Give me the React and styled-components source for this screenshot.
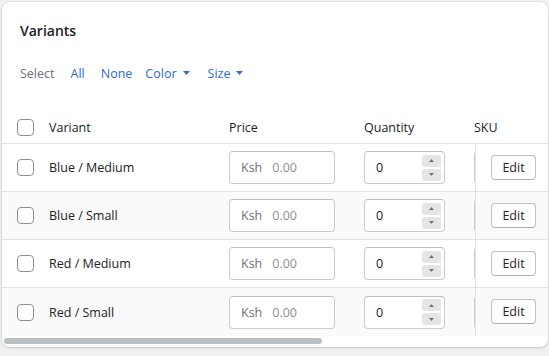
import React from "react";
import styled, { createGlobalStyle } from "styled-components";

const GlobalStyle = createGlobalStyle`
  html, body { margin: 0; padding: 0; background: #f1f1f1; }
  body { font-family: "Open Sans", "Noto Sans", sans-serif; color: #202223; }
  * { box-sizing: border-box; }
`;

const VIEW_WIDTH = 546;
const TABLE_WIDTH = 926;

const Page = styled.div`
  padding: 2px 1px 10px 2px;
  width: 549px;
`;

const Card = styled.section`
  background: #fff;
  border-radius: 8px;
  box-shadow: 0 0 0 1px rgba(63, 63, 68, 0.06), 0 1px 3px 0 rgba(63, 63, 68, 0.18);
  overflow: hidden;
  padding-top: 18px;
`;

const Title = styled.h2`
  margin: 0;
  padding: 0 18px;
  font-size: 14px;
  font-weight: 600;
  line-height: 22px;
  color: #202223;
`;

const FilterBar = styled.div`
  display: flex;
  align-items: center;
  gap: 15px;
  padding: 0 18px;
  margin-top: 20px;
  height: 22px;
  font-size: 12.5px;
`;

const FilterLabel = styled.span`
  color: #6d7175;
`;

const FilterButton = styled.button`
  display: inline-flex;
  align-items: center;
  gap: 6px;
  border: 0;
  background: none;
  padding: 0;
  margin-left: ${(p) => p.$shift || 0}px;
  font: inherit;
  color: #2c6ecb;
  cursor: pointer;
`;

const Caret = () => (
  <svg width="7" height="4" viewBox="0 0 7 4" aria-hidden="true">
    <path d="M0 0h7L3.5 4z" fill="#2c6ecb" />
  </svg>
);

const Scroller = styled.div`
  margin-top: 27px;
  overflow: hidden;
`;

const ScrollTrack = styled.div`
  height: 11px;
  padding: 2px 2px 3px;
`;

const ScrollThumb = styled.div`
  height: 100%;
  border-radius: 4px;
  background: #babfc4;
`;

const Table = styled.div`
  width: ${TABLE_WIDTH}px;
`;

const Row = styled.div`
  display: grid;
  grid-template-columns: 47px 180px 135px 110px 381px 73px;
  align-items: center;
  height: ${(p) => (p.$head ? 33 : 48)}px;
  background: ${(p) => (p.$shade ? "#fafafa" : "#fff")};
  border-bottom: ${(p) => (p.$last ? "0" : "1px solid #e1e3e5")};
  font-size: 12.5px;
`;

const Cell = styled.div`
  display: flex;
  align-items: center;
  height: 100%;
  padding-left: ${(p) => p.$pad || 0}px;
  font-weight: 500;
  color: #202223;
  white-space: nowrap;
`;

const StickyCell = styled.div`
  position: sticky;
  right: 0;
  display: flex;
  align-items: center;
  height: 100%;
  padding-left: 15px;
  background: ${(p) => (p.$shade ? "#fafafa" : "#fff")};
  border-left: 1px solid #e1e3e5;
`;

const Checkbox = styled.span`
  display: inline-block;
  width: 17px;
  height: 17px;
  border: 1px solid #8c9196;
  border-radius: 4px;
  background: #fff;
`;

const Field = styled.div`
  display: flex;
  align-items: center;
  width: ${(p) => p.$w}px;
  height: 33px;
  border: 1px solid #c9cccf;
  border-top-color: #babfc3;
  border-radius: 4px;
  background: #fff;
  padding: 0 3px 0 11px;
  font-size: 12.5px;
  font-weight: 400;
`;

const Prefix = styled.span`
  color: #6d7175;
  margin-right: 10px;
`;

const Placeholder = styled.span`
  color: #8c9196;
`;

const Value = styled.span`
  flex: 1;
  color: #202223;
`;

const Spinner = styled.div`
  display: flex;
  flex-direction: column;
  gap: 2px;
`;

const SpinButton = styled.span`
  display: flex;
  align-items: center;
  justify-content: center;
  width: 19px;
  height: 12px;
  border-radius: 2px;
  background: #e4e5e7;
`;

const Arrow = ({ up }) => (
  <svg width="5" height="3" viewBox="0 0 5 3" aria-hidden="true">
    <path d={up ? "M0 3h5L2.5 0z" : "M0 0h5L2.5 3z"} fill="#6d7175" />
  </svg>
);

const EditButton = styled.button`
  height: 25px;
  width: 45px;
  border: 1px solid #babfc3;
  border-bottom-color: #a9aeb3;
  border-radius: 4px;
  background: #fff;
  font: inherit;
  font-size: 12.5px;
  color: #202223;
  padding: 0;
  margin-top: -1px;
`;

const variants = ["Blue / Medium", "Blue / Small", "Red / Medium", "Red / Small"];

export default function App() {
  const thumbWidth = Math.round(((VIEW_WIDTH - 4) * VIEW_WIDTH) / TABLE_WIDTH) - 2;
  return (
    <>
      <GlobalStyle />
      <Page>
        <Card>
          <Title>Variants</Title>
          <FilterBar>
            <FilterLabel>Select</FilterLabel>
            <FilterButton $shift={1}>All</FilterButton>
            <FilterButton $shift={1}>None</FilterButton>
            <FilterButton $shift={-2}>
              Color <Caret />
            </FilterButton>
            <FilterButton $shift={3}>
              Size <Caret />
            </FilterButton>
          </FilterBar>
          <Scroller>
            <Table>
              <Row $head>
                <Cell $pad={15}>
                  <Checkbox />
                </Cell>
                <Cell>Variant</Cell>
                <Cell>Price</Cell>
                <Cell>Quantity</Cell>
                <Cell>SKU</Cell>
                <Cell />
              </Row>
              {variants.map((v, i) => (
                <Row key={v} $shade={i % 2 === 1} $last={i === variants.length - 1}>
                  <Cell $pad={15}>
                    <Checkbox />
                  </Cell>
                  <Cell>{v}</Cell>
                  <Cell>
                    <Field $w={106}>
                      <Prefix>Ksh</Prefix>
                      <Placeholder>0.00</Placeholder>
                    </Field>
                  </Cell>
                  <Cell>
                    <Field $w={81}>
                      <Value>0</Value>
                      <Spinner>
                        <SpinButton>
                          <Arrow up />
                        </SpinButton>
                        <SpinButton>
                          <Arrow />
                        </SpinButton>
                      </Spinner>
                    </Field>
                  </Cell>
                  <Cell>
                    <Field $w={170} />
                  </Cell>
                  <StickyCell $shade={i % 2 === 1}>
                    <EditButton>Edit</EditButton>
                  </StickyCell>
                </Row>
              ))}
            </Table>
          </Scroller>
          <ScrollTrack>
            <ScrollThumb style={{ width: thumbWidth }} />
          </ScrollTrack>
        </Card>
      </Page>
    </>
  );
}
